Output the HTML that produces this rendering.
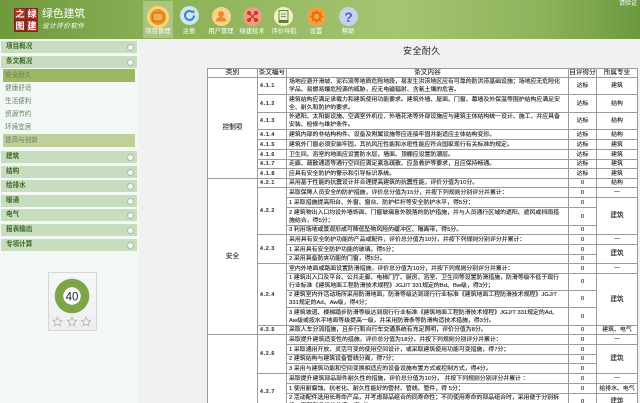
<!DOCTYPE html>
<html lang="zh"><head><meta charset="utf-8"><style>
html,body{margin:0;padding:0;width:640px;height:403px;overflow:hidden}
body{position:relative;background:#f1f1f2;font-family:"Liberation Sans","Noto Sans CJK SC",sans-serif;color:#222}
#hd{position:absolute;left:0;top:0;width:640px;height:39px;background:linear-gradient(90deg,#6f9a3c 0,#8ab056 25%,#a6c572 62%,#8db25c 85%,#6d9a3e 100%);border-bottom:0}
#hd div,#hd svg{position:absolute}
.sq{width:12px;height:12px;background:#a8392c;border:1px solid #7c2a20;box-sizing:border-box;color:#fff;font-size:9px;line-height:11px;text-align:center;font-weight:bold}
.nl{top:28px;width:36px;text-align:center;color:#fff;font-size:6.3px;line-height:8px;white-space:nowrap}
#sb{position:absolute;left:0;top:39px;width:139px;height:364px;background:#f2f8f3}
.g{position:absolute;left:1px;width:136px;height:12px;background:#c8dcc0;color:#3c6a20;font-size:6.6px;line-height:12px;text-indent:5px;font-weight:bold}
.g i{position:absolute;right:3px;top:2.5px;width:7px;height:7px;border-radius:50%;background:#f5f8f3;border:.5px solid #a9bda3;box-sizing:border-box}
.s{position:absolute;left:3px;width:132px;height:13px;font-size:6.6px;line-height:13px;text-indent:2px;color:#6a7d62}
#ti{position:absolute;left:403px;top:45px;font-size:9px;line-height:12px;letter-spacing:.4px;color:#222}
table{position:absolute;left:207px;top:68px;width:430px;table-layout:fixed;border-collapse:collapse;background:#fff;font-size:5.9px;line-height:8px;-webkit-text-stroke:.12px #222}
td,th{border:1px solid #9a9a9a;padding:0;text-align:center;font-weight:normal;overflow:hidden}
td.t{text-align:left;padding-left:2px;white-space:nowrap}
td.c{font-size:5.4px;letter-spacing:.6px;text-align:left;padding-left:2px;font-weight:bold;color:#444}
td.b{font-size:6.6px}
</style></head><body>
<div id="hd">
<div style="left:143px;top:1px;width:30px;height:37px;background:rgba(225,225,190,.42)"></div>
<div class="sq" style="left:14px;top:8px;background:#b03a2e">之</div><div class="sq" style="left:26px;top:8px;background:#a23428">绿</div>
<div class="sq" style="left:14px;top:20px;background:#8d3026">图</div><div class="sq" style="left:26px;top:20px;background:#a8392c">建</div>
<div style="left:42px;top:7px;color:#fff;font-size:10.8px;line-height:15px;white-space:nowrap">绿色建筑</div>
<div style="left:42px;top:22px;color:#fff;font-size:6.6px;line-height:9px;white-space:nowrap;font-style:italic;letter-spacing:.5px">设计评价软件</div>
<svg style="left:147px;top:6px" width="22" height="22" viewBox="0 0 22 22"><circle cx="11" cy="11" r="11" fill="#f8d868"/><circle cx="11" cy="11" r="8" fill="#ee8f2c"/><rect x="6" y="7" width="10" height="8" rx="1" fill="#f5b04c" stroke="#b85c18" stroke-width=".7"/></svg>
<svg style="left:180px;top:6px" width="19" height="19" viewBox="0 0 19 19"><circle cx="9.5" cy="9.5" r="9.5" fill="#cfe6ee"/><path d="M14 9.5a4.5 4.5 0 1 1-1.5-3.4" fill="none" stroke="#2f86c8" stroke-width="2"/><path d="M11 5l3.5-.7-.4 3.4z" fill="#2f86c8"/></svg>
<svg style="left:212px;top:7px" width="19" height="19" viewBox="0 0 19 19"><circle cx="9.5" cy="9.5" r="9.5" fill="#f9d488"/><circle cx="9" cy="7" r="3" fill="#ee8a2c"/><path d="M3.5 14.5c.5-3.5 3-4.500 5.500-4.500s5 1 5.500 4.500z" fill="#ee8a2c"/></svg>
<svg style="left:243px;top:7px" width="19" height="19" viewBox="0 0 19 19"><circle cx="9.500" cy="9.500" r="9.500" fill="#f29a82"/><path d="M6 6l7 7M13 6l-7 7" stroke="#c8392e" stroke-width="1.300"/><circle cx="6" cy="6" r="2" fill="#c8392e"/><circle cx="13" cy="6" r="2" fill="#c8392e"/><circle cx="6" cy="13" r="2" fill="#c8392e"/><circle cx="13" cy="13" r="2" fill="#c8392e"/></svg>
<svg style="left:274px;top:7px" width="19" height="19" viewBox="0 0 19 19"><circle cx="9.500" cy="9.500" r="9.500" fill="#f2f4c0"/><rect x="5" y="3.500" width="9" height="12" fill="#e8eecc" stroke="#5d7a3a" stroke-width=".9"/><path d="M7 7h5M7 9.500h5" stroke="#5d7a3a" stroke-width=".8"/><rect x="5" y="13" width="9" height="2.500" fill="#5d7a3a"/></svg>
<svg style="left:307px;top:7px" width="19" height="19" viewBox="0 0 19 19"><circle cx="9.500" cy="9.500" r="9.500" fill="#f5a040"/><circle cx="9.500" cy="9.500" r="4" fill="none" stroke="#e07010" stroke-width="2.200"/><path d="M9.500 3v2.500M9.500 13.500V16M3 9.500h2.500M13.500 9.500H16M5 5l1.700 1.700M12.300 12.300L14 14M14 5l-1.700 1.700M6.700 12.300L5 14" stroke="#e07010" stroke-width="1.500"/></svg>
<svg style="left:339px;top:7px" width="19" height="19" viewBox="0 0 19 19"><circle cx="9.500" cy="9.500" r="9.500" fill="#c4d2f0"/><text x="9.500" y="15" font-size="14" font-weight="bold" text-anchor="middle" fill="#5060c0" font-family="Liberation Sans">?</text></svg>
<div class="nl" style="left:140px">项目管理</div><div class="nl" style="left:171px">注册</div><div class="nl" style="left:203px">用户管理</div><div class="nl" style="left:234px">绿建技术</div><div class="nl" style="left:266px">评价导航</div><div class="nl" style="left:298px">设置</div><div class="nl" style="left:330px">帮助</div>
<div style="left:619px;top:0;color:#fff;font-size:6px;line-height:8px;white-space:nowrap">请验证</div>
</div>
<div id="sb">
<div class="g" style="top:2px">项目概况<i></i></div>
<div class="g" style="top:17px">条文概况<i></i></div>
<div class="s" style="top:30px;background:#9eb862">安全耐久</div>
<div class="s" style="top:43px">健康舒适</div><div class="s" style="top:56px">生活便利</div><div class="s" style="top:69px">资源节约</div><div class="s" style="top:82px">环境宜居</div>
<div class="s" style="top:95px;background:#bfd09a">提高与创新</div>
<div class="g" style="top:112px">建筑<i></i></div><div class="g" style="top:127px">结构<i></i></div><div class="g" style="top:141px">给排水<i></i></div><div class="g" style="top:156px">暖通<i></i></div><div class="g" style="top:170px">电气<i></i></div><div class="g" style="top:185px">报表输出<i></i></div><div class="g" style="top:200px">专项计算<i></i></div>
<div style="position:absolute;left:48px;top:233px;width:49px;height:59px;background:linear-gradient(#f6f6f6,#efefef);border:1px solid #d5d8d2;box-sizing:border-box"></div>
<svg style="position:absolute;left:48px;top:233px" width="49" height="59" viewBox="0 0 49 59"><circle cx="24" cy="24" r="13" fill="#fff" stroke="#7da44a" stroke-width="8.500"/><text x="24" y="28.500" font-size="11.500" text-anchor="middle" fill="#222" font-family="Liberation Sans">40</text><g fill="none" stroke="#aaa" stroke-width=".7"><path d="M9.500 45l1.400 3 3.200.4-2.300 2.200.6 3.200-2.900-1.600-2.900 1.600.6-3.200-2.300-2.200 3.200-.4z"/><path d="M24 45l1.400 3 3.200.4-2.300 2.200.6 3.200-2.900-1.600-2.900 1.600.6-3.200-2.300-2.200 3.200-.4z"/><path d="M38 45l1.400 3 3.200.4-2.300 2.200.6 3.200-2.900-1.600-2.900 1.600.6-3.200-2.300-2.200 3.200-.4z"/></g></svg>
</div>
<div id="ti">安全耐久</div>
<table><colgroup><col style="width:50px"><col style="width:29px"><col style="width:282px"><col style="width:28px"><col style="width:41px"></colgroup>
<tr style="height:9px"><td class="b">类别</td><td class="b">条文编号</td><td class="b">条文内容</td><td class="b">自评得分</td><td class="b">所属专业</td></tr>
<tr style="height:17px"><td rowspan="8" class="b">控制项</td><td class="c">4.1.1</td><td class="t">场地应避开滑坡、泥石流等地质危险地段，易发生洪涝地区应有可靠的防洪涝基础设施；场地应无危险化<br>学品、易燃易爆危险源的威胁，应无电磁辐射、含氡土壤的危害。</td><td>达标</td><td>建筑</td></tr>
<tr style="height:18px"><td class="c">4.1.2</td><td class="t">建筑结构应满足承载力和建筑使用功能要求。建筑外墙、屋面、门窗、幕墙及外保温等围护结构应满足安<br>全、耐久和防护的要求。</td><td>达标</td><td>结构</td></tr>
<tr style="height:17px"><td class="c">4.1.3</td><td class="t">外遮阳、太阳能设施、空调室外机位、外墙花池等外部设施应与建筑主体结构统一设计、施工，并应具备<br>安装、检修与维护条件。</td><td>达标</td><td>结构</td></tr>
<tr style="height:10px"><td class="c">4.1.4</td><td class="t">建筑内部的非结构构件、设备及附属设施等应连接牢固并能适应主体结构变形。</td><td>达标</td><td>结构</td></tr>
<tr style="height:10px"><td class="c">4.1.5</td><td class="t">建筑外门窗必须安装牢固，其抗风压性能和水密性能应符合国家现行有关标准的规定。</td><td>达标</td><td>建筑</td></tr>
<tr style="height:10px"><td class="c">4.1.6</td><td class="t">卫生间、浴室的地面应设置防水层，墙面、顶棚应设置防潮层。</td><td>达标</td><td>建筑</td></tr>
<tr style="height:9px"><td class="c">4.1.7</td><td class="t">走廊、疏散通道等通行空间应满足紧急疏散、应急救护等要求，且应保持畅通。</td><td>达标</td><td>建筑</td></tr>
<tr style="height:10px"><td class="c">4.1.8</td><td class="t">应具有安全防护的警示和引导标识系统。</td><td>达标</td><td>建筑</td></tr>
<tr style="height:9px"><td rowspan="13" class="b">安全</td><td class="c">4.2.1</td><td class="t">采用基于性能的抗震设计并合理提高建筑的抗震性能，评价分值为10分。</td><td>0</td><td>结构</td></tr>
<tr style="height:10px"><td rowspan="4" class="c">4.2.2</td><td class="t">采取保障人员安全的防护措施，评价总分值为15分，并按下列规则分别评分并累计：</td><td>0</td><td>一</td></tr>
<tr style="height:10px"><td class="t">1 采取措施提高阳台、外窗、窗台、防护栏杆等安全防护水平，得5分；</td><td>0</td><td rowspan="3" class="b">建筑</td></tr>
<tr style="height:18px"><td class="t">2 建筑物出入口均设外墙饰面、门窗玻璃意外脱落的防护措施，并与人员通行区域的遮阳、遮风或挡雨措<br>施结合，得5分；</td><td>0</td></tr>
<tr style="height:9px"><td class="t">3 利用场地或景观形成可降低坠物风险的缓冲区、隔离带，得5分。</td><td>0</td></tr>
<tr style="height:10px"><td rowspan="3" class="c">4.2.3</td><td class="t">采用具有安全防护功能的产品或配件，评价总分值为10分，并按下列规则分别评分并累计：</td><td>0</td><td>一</td></tr>
<tr style="height:10px"><td class="t">1 采用具有安全防护功能的玻璃，得5分；</td><td>0</td><td rowspan="2" class="b">建筑</td></tr>
<tr style="height:9px"><td class="t">2 采用具备防夹功能的门窗，得5分。</td><td>0</td></tr>
<tr style="height:10px"><td rowspan="4" class="c">4.2.4</td><td class="t">室内外地面或路面设置防滑措施，评价总分值为10分，并按下列规则分别评分并累计：</td><td>0</td><td>一</td></tr>
<tr style="height:17px"><td class="t">1 建筑出入口及平台、公共走廊、电梯门厅、厨房、浴室、卫生间等设置防滑措施，防滑等级不低于现行<br>行业标准《建筑地面工程防滑技术规程》JGJ/T 331规定的Bd、Bw级，得3分；</td><td>0</td><td rowspan="3" class="b">建筑</td></tr>
<tr style="height:17px"><td class="t">2 建筑室内外活动场所采用防滑地面，防滑等级达到现行行业标准《建筑地面工程防滑技术规程》JGJ/T<br>331规定的Ad、Aw级，得4分；</td><td>0</td></tr>
<tr style="height:18px"><td class="t">3 建筑坡道、楼梯踏步防滑等级达到现行行业标准《建筑地面工程防滑技术规程》JGJ/T 331规定的Ad、<br>Aw级或按水平地面等级提高一级，并采用防滑条等防滑构造技术措施，得3分。</td><td>0</td></tr>
<tr style="height:9px"><td class="c">4.2.5</td><td class="t">采取人车分流措施，且步行和自行车交通系统有充足照明，评价分值为8分。</td><td>0</td><td>建筑、电气</td></tr>
<tr style="height:10px"><td rowspan="7"></td><td rowspan="4" class="c">4.2.6</td><td class="t">采取提升建筑适变性的措施，评价总分值为18分，并按下列规则分别评分并累计：</td><td>0</td><td>一</td></tr>
<tr style="height:10px"><td class="t">1 采取通用开放、灵活可变的使用空间设计，或采取建筑使用功能可变措施，得7分；</td><td>0</td><td rowspan="3" class="b">建筑</td></tr>
<tr style="height:9px"><td class="t">2 建筑结构与建筑设备管线分离，得7分；</td><td>0</td></tr>
<tr style="height:10px"><td class="t">3 采用与建筑功能和空间变换相适应的设备设施布置方式或控制方式，得4分。</td><td>0</td></tr>
<tr style="height:10px"><td rowspan="3" class="c">4.2.7</td><td class="t">采取提升建筑部品部件耐久性的措施，评价总分值为10分， 并按下列规则分别评分并累计 ：</td><td>0</td><td>一</td></tr>
<tr style="height:10px"><td class="t">1 使用耐腐蚀、抗老化、耐久性能好的管材、管线、管件，得 5分；</td><td>0</td><td>给排水、电气</td></tr>
<tr style="height:17px"><td class="t">2 活动配件选用长寿命产品，并考虑部品组合的同寿命性；不同使用寿命的部品组合时，采用便于分别拆<br>换、更新和升级的构造，得5分。</td><td>0</td><td class="b">建筑</td></tr>
</table>
</body></html>
